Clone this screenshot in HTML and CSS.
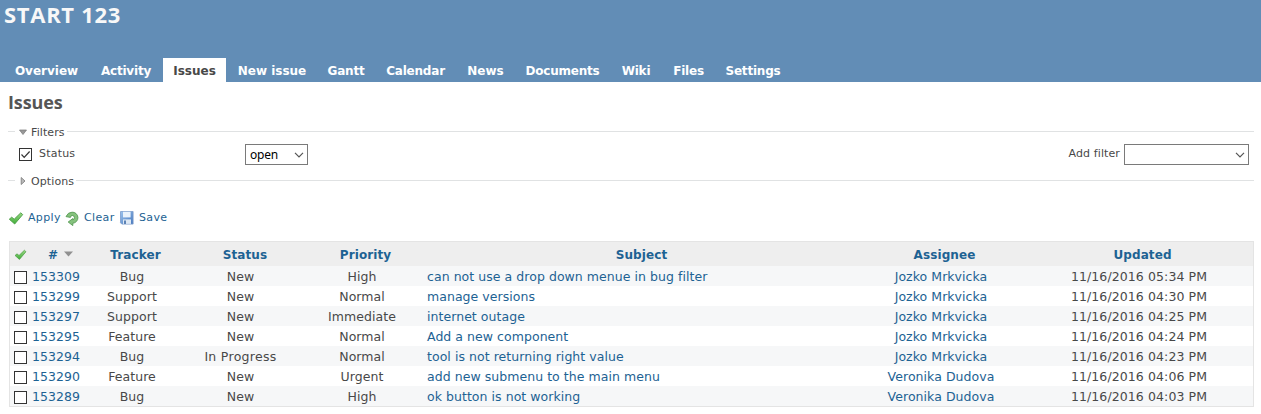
FILE: index.html
```
<!DOCTYPE html>
<html lang="en">
<head>
<meta charset="utf-8">
<title>Issues - START 123</title>
<link rel="stylesheet" href="styles.css">
</head>
<body>
<svg class="defs" aria-hidden="true">
  <defs>
    <linearGradient id="green" x1="0" y1="0" x2="0" y2="1"><stop offset="0" stop-color="#9bd884"/><stop offset="1" stop-color="#3fae38"/></linearGradient>
    <linearGradient id="blue" x1="0" y1="0" x2="1" y2="1"><stop offset="0" stop-color="#9cc3ee"/><stop offset="1" stop-color="#4577bd"/></linearGradient>
    <symbol id="check" viewBox="0 0 16 16"><path d="M1.3 9.2 3.7 7.2l2.5 2L12.8 2.8l1.9 1.8-8 9.4z" fill="url(#green)" stroke="#4b9c45" stroke-width=".9" stroke-linejoin="round"/></symbol>
    <symbol id="chevron" viewBox="0 0 10 6"><path d="M1 .8 5 4.8 9 .8" fill="none" stroke="#555" stroke-width="1.2"/></symbol>
  </defs>
</svg>
<header class="header">
  <h1 class="title">START 123</h1>
  <nav class="menu">
    <a class="wide">Overview</a><a>Activity</a><a class="selected">Issues</a><a class="wide">New issue</a><a>Gantt</a><a>Calendar</a><a class="wide">News</a><a>Documents</a><a>Wiki</a><a>Files</a><a>Settings</a>
  </nav>
</header>
<main class="content">
  <h2 class="heading">Issues</h2>
  <div class="legend"><svg class="arrow" viewBox="0 0 8 8"><path d="M.5 2h7L4 6.5z" fill="#999" stroke="#777" stroke-width=".7"/></svg><span class="legend-text">Filters</span></div>
  <div class="filters">
    <span class="box"><svg viewBox="0 0 11 11"><path d="M1.5 5.5 4.2 8.3 9.6 2.5" fill="none" stroke="#333" stroke-width="1.2"/></svg></span>
    <span class="status-label">Status</span>
    <span class="select select-open"><span>open</span><svg class="chev"><use href="#chevron"/></svg></span>
    <span class="add-label">Add filter</span>
    <span class="select select-add"><svg class="chev"><use href="#chevron"/></svg></span>
  </div>
  <div class="legend"><svg class="arrow" viewBox="0 0 8 8"><path d="M2.2.5v7L6 4z" fill="#bbb" stroke="#777" stroke-width=".8"/></svg><span class="legend-text">Options</span></div>
  <div class="buttons">
    <svg class="icon"><use href="#check"/></svg><a class="b-apply">Apply</a>
    <svg class="icon" viewBox="0 0 16 16"><path d="M2 6.6Q4 2.2 8 2.2a5.5 5.5 0 0 1 .8 11v2.4L4.2 12l4.6-3.4v1.3a2.3 2.3 0 0 0-.6-4.5Q6.6 5.6 6.4 7.4z" fill="#86c27e" stroke="#559a52" stroke-width=".9" stroke-linejoin="round"/></svg><a class="b-clear">Clear</a>
    <svg class="icon" viewBox="0 0 16 16"><path d="M1.5 1.5h12.6v12.6H2.8l-1.3-1.3z" fill="url(#blue)" stroke="#7c9ccb" stroke-width=".8"/><path d="M4 1.8h7.6v5.6H4z" fill="#eaf2fb"/><path d="M4 9.4h8v4.5H4z" fill="#dfe9f4"/><path d="M5 10.4h2v3.5H5z" fill="#5d83b5"/></svg><a class="b-save">Save</a>
  </div>
  <table class="issues">
    <colgroup><col class="c-box"><col class="c-id"><col class="c-tracker"><col class="c-status"><col class="c-priority"><col class="c-subject"><col class="c-assignee"><col class="c-updated"></colgroup>
    <thead><tr><th class="check"><svg class="small-check"><use href="#check"/></svg></th><th class="id"># <svg class="sort" viewBox="0 0 9 6"><path d="M0 .5h9L4.5 5.5z" fill="#909090"/></svg></th><th>Tracker</th><th class="h-status">Status</th><th>Priority</th><th>Subject</th><th>Assignee</th><th>Updated</th></tr></thead>
    <tbody>
      <tr><td class="check"><span class="box"></span></td><td class="id"><a>153309</a></td><td>Bug</td><td>New</td><td>High</td><td class="subject"><a>can not use a drop down menue in bug filter</a></td><td><a>Jozko Mrkvicka</a></td><td class="date">11/16/2016 05:34 PM</td></tr>
      <tr><td class="check"><span class="box"></span></td><td class="id"><a>153299</a></td><td>Support</td><td>New</td><td>Normal</td><td class="subject"><a>manage versions</a></td><td><a>Jozko Mrkvicka</a></td><td class="date">11/16/2016 04:30 PM</td></tr>
      <tr><td class="check"><span class="box"></span></td><td class="id"><a>153297</a></td><td>Support</td><td>New</td><td>Immediate</td><td class="subject"><a>internet outage</a></td><td><a>Jozko Mrkvicka</a></td><td class="date">11/16/2016 04:25 PM</td></tr>
      <tr><td class="check"><span class="box"></span></td><td class="id"><a>153295</a></td><td>Feature</td><td>New</td><td>Normal</td><td class="subject"><a>Add a new component</a></td><td><a>Jozko Mrkvicka</a></td><td class="date">11/16/2016 04:24 PM</td></tr>
      <tr><td class="check"><span class="box"></span></td><td class="id"><a>153294</a></td><td>Bug</td><td class="progress">In Progress</td><td>Normal</td><td class="subject"><a>tool is not returning right value</a></td><td><a>Jozko Mrkvicka</a></td><td class="date">11/16/2016 04:23 PM</td></tr>
      <tr><td class="check"><span class="box"></span></td><td class="id"><a>153290</a></td><td>Feature</td><td>New</td><td>Urgent</td><td class="subject"><a>add new submenu to the main menu</a></td><td><a>Veronika Dudova</a></td><td class="date">11/16/2016 04:06 PM</td></tr>
      <tr><td class="check"><span class="box"></span></td><td class="id"><a>153289</a></td><td>Bug</td><td>New</td><td>High</td><td class="subject"><a>ok button is not working</a></td><td><a>Veronika Dudova</a></td><td class="date">11/16/2016 04:03 PM</td></tr>
    </tbody>
  </table>
</main>
</body>
</html>
```
FILE: styles.css
```
* { box-sizing: border-box; }
html, body { margin: 0; height: 414px; overflow: hidden; background: #fff; }
body { font-family: Verdana, "DejaVu Sans", sans-serif; font-size: 12px; color: #484848; }
svg { display: block; flex: none; }
a { color: #1d6293; }
.defs { width: 0; height: 0; position: absolute; }

.header { height: 82px; background: #628db6; display: flex; flex-direction: column; justify-content: space-between; }
.title { margin: 0; padding: 0 0 0 4px; font: 700 22px/29px "Open Sans", sans-serif; letter-spacing: .7px; color: #f8f8f8; }
.menu { display: grid; grid-template-columns: 85px 70px 63px 88px 56px 79px 57px 93px 50px 51px 74px; gap: 2px; margin-left: 4px; }
.menu a { height: 24px; line-height: 27px; text-align: center; white-space: nowrap; color: #fff; font-weight: bold; letter-spacing: -.2px; }
.menu .wide { letter-spacing: 0; }
.menu .selected { background: #fff; color: #484848; letter-spacing: 0; }

.content { padding: 0 7px 0 8px; }
.heading { margin: 0; height: 41px; font: 700 18px/40px "Open Sans", sans-serif; letter-spacing: -.1px; color: #555; }
.legend { height: 16px; display: flex; align-items: center; font-size: 11px; }
.legend::before { content: ""; width: 7px; height: 1px; background: #e0e2e3; }
.legend::after { content: ""; flex: 1; height: 1px; margin-left: 2px; background: #e0e2e3; }
.legend-text { line-height: 14px; padding-top: 3px; letter-spacing: .1px; }
.arrow { width: 8px; height: 8px; margin: 1px 4px 0; }
.filters { height: 33px; display: flex; align-items: flex-start; padding: 5px 5px 0 11px; font-size: 11px; }
.box { display: block; width: 13px; height: 13px; border: 1px solid #333; background: #fff; }
.box svg { width: 11px; height: 11px; }
.filters .box { margin-top: 4px; }
.status-label { width: 206px; margin-left: 7px; line-height: 20px; letter-spacing: .2px; }
.select { height: 21px; border: 1px solid #7a7a7a; display: flex; align-items: center; justify-content: flex-end; padding: 0 3px 0 4px; color: #000; }
.select-open { width: 63px; justify-content: space-between; font: 12px/20px "Noto Sans", sans-serif; }
.select-open span { padding-top: 1px; letter-spacing: -.2px; }
.select-add { width: 125px; }
.chev { width: 10px; height: 6px; }
.add-label { margin: 0 4px 0 auto; line-height: 20px; letter-spacing: .1px; }
.buttons { height: 16px; margin: 22px 0 15px; display: flex; align-items: center; font-size: 11px; line-height: 14px; letter-spacing: .35px; }
.icon { width: 16px; height: 16px; }
.b-apply { width: 32px; margin: 0 4px; }
.b-clear { width: 31px; margin: 0 4px; }
.b-save { margin-left: 4px; }

.issues { width: 1245px; margin-left: 1px; border: 1px solid #e4e4e4; border-collapse: separate; border-spacing: 0; table-layout: fixed; font-size: 12.5px; }
.c-box { width: 21px; }
.c-id { width: 57px; }
.c-tracker { width: 88px; }
.c-status { width: 129px; }
.c-priority { width: 114px; }
.c-subject { width: 438px; }
.c-assignee { width: 168px; }
.issues th { height: 24px; padding: 2px 0 0 7px; background: #eee; color: #1d6293; text-align: center; font-size: 12px; line-height: 22px; white-space: nowrap; letter-spacing: .1px; }
.issues td { height: 20px; padding: 1px 0 0; text-align: center; line-height: 19px; white-space: nowrap; letter-spacing: .05px; }
.issues tbody tr:nth-child(odd) { background: #f6f7f8; }
.issues th.check { padding: 0 0 0 4px; }
.issues td.check { padding: 3px 0 0 4px; }
.issues th.h-status { padding-left: 9px; }
.issues th.id { text-align: left; padding-left: 17px; }
.issues td.id { text-align: left; padding-left: 1px; }
.issues td.subject { text-align: left; padding-left: 8px; }
.issues td.date { letter-spacing: .1px; }
.issues td.progress { letter-spacing: .3px; }
.small-check { width: 13px; height: 13px; }
.sort { display: inline-block; width: 9px; height: 6px; margin-left: 2px; vertical-align: 2px; }
```
